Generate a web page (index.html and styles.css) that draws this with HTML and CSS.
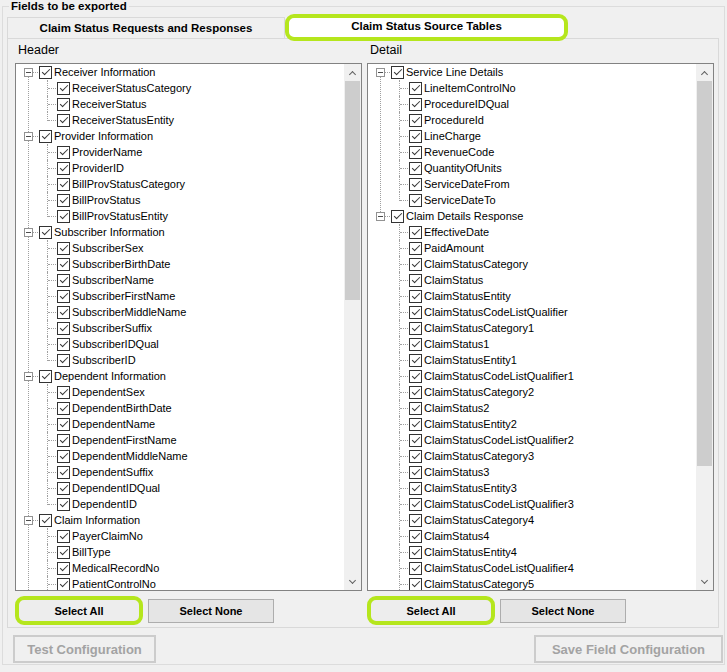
FILE: index.html
```html
<!DOCTYPE html>
<html>
<head>
    <meta charset="utf-8">
    <title>Fields to be exported</title>
    <link rel="stylesheet" href="styles.css">
</head>
<body>
<div class="group">
    <div class="group-title">Fields to be exported</div>
    <div class="tabs">
        <div class="tab">Claim Status Requests and Responses</div>
        <div class="tab active">Claim Status Source Tables</div>
    </div>
    <div class="tab-page">
        <div class="column">
            <div class="caption">Header</div>
            <div class="tree">
                <ul class="tree-body">
                    <li class="node">
                        <div class="row"><span class="exp"></span><span class="cb"></span>Receiver Information</div>
                        <ul class="kids">
                            <li><span class="cb"></span>ReceiverStatusCategory</li>
                            <li><span class="cb"></span>ReceiverStatus</li>
                            <li><span class="cb"></span>ReceiverStatusEntity</li>
                        </ul>
                    </li>
                    <li class="node">
                        <div class="row"><span class="exp"></span><span class="cb"></span>Provider Information</div>
                        <ul class="kids">
                            <li><span class="cb"></span>ProviderName</li>
                            <li><span class="cb"></span>ProviderID</li>
                            <li><span class="cb"></span>BillProvStatusCategory</li>
                            <li><span class="cb"></span>BillProvStatus</li>
                            <li><span class="cb"></span>BillProvStatusEntity</li>
                        </ul>
                    </li>
                    <li class="node">
                        <div class="row"><span class="exp"></span><span class="cb"></span>Subscriber Information</div>
                        <ul class="kids">
                            <li><span class="cb"></span>SubscriberSex</li>
                            <li><span class="cb"></span>SubscriberBirthDate</li>
                            <li><span class="cb"></span>SubscriberName</li>
                            <li><span class="cb"></span>SubscriberFirstName</li>
                            <li><span class="cb"></span>SubscriberMiddleName</li>
                            <li><span class="cb"></span>SubscriberSuffix</li>
                            <li><span class="cb"></span>SubscriberIDQual</li>
                            <li><span class="cb"></span>SubscriberID</li>
                        </ul>
                    </li>
                    <li class="node">
                        <div class="row"><span class="exp"></span><span class="cb"></span>Dependent Information</div>
                        <ul class="kids">
                            <li><span class="cb"></span>DependentSex</li>
                            <li><span class="cb"></span>DependentBirthDate</li>
                            <li><span class="cb"></span>DependentName</li>
                            <li><span class="cb"></span>DependentFirstName</li>
                            <li><span class="cb"></span>DependentMiddleName</li>
                            <li><span class="cb"></span>DependentSuffix</li>
                            <li><span class="cb"></span>DependentIDQual</li>
                            <li><span class="cb"></span>DependentID</li>
                        </ul>
                    </li>
                    <li class="node">
                        <div class="row"><span class="exp"></span><span class="cb"></span>Claim Information</div>
                        <ul class="kids cont">
                            <li><span class="cb"></span>PayerClaimNo</li>
                            <li><span class="cb"></span>BillType</li>
                            <li><span class="cb"></span>MedicalRecordNo</li>
                            <li><span class="cb"></span>PatientControlNo</li>
                        </ul>
                    </li>
                </ul>
                <div class="scrollbar">
                    <span class="sb-btn"><i class="chev up"></i></span>
                    <span class="thumb short"></span>
                    <span class="track"></span>
                    <span class="sb-btn"><i class="chev down"></i></span>
                </div>
            </div>
            <div class="buttons">
                <button class="btn marked">Select All</button>
                <button class="btn">Select None</button>
            </div>
        </div>
        <div class="column">
            <div class="caption">Detail</div>
            <div class="tree">
                <ul class="tree-body">
                    <li class="node">
                        <div class="row"><span class="exp"></span><span class="cb"></span>Service Line Details</div>
                        <ul class="kids">
                            <li><span class="cb"></span>LineItemControlNo</li>
                            <li><span class="cb"></span>ProcedureIDQual</li>
                            <li><span class="cb"></span>ProcedureId</li>
                            <li><span class="cb"></span>LineCharge</li>
                            <li><span class="cb"></span>RevenueCode</li>
                            <li><span class="cb"></span>QuantityOfUnits</li>
                            <li><span class="cb"></span>ServiceDateFrom</li>
                            <li><span class="cb"></span>ServiceDateTo</li>
                        </ul>
                    </li>
                    <li class="node last">
                        <div class="row"><span class="exp"></span><span class="cb"></span>Claim Details Response</div>
                        <ul class="kids cont">
                            <li><span class="cb"></span>EffectiveDate</li>
                            <li><span class="cb"></span>PaidAmount</li>
                            <li><span class="cb"></span>ClaimStatusCategory</li>
                            <li><span class="cb"></span>ClaimStatus</li>
                            <li><span class="cb"></span>ClaimStatusEntity</li>
                            <li><span class="cb"></span>ClaimStatusCodeListQualifier</li>
                            <li><span class="cb"></span>ClaimStatusCategory1</li>
                            <li><span class="cb"></span>ClaimStatus1</li>
                            <li><span class="cb"></span>ClaimStatusEntity1</li>
                            <li><span class="cb"></span>ClaimStatusCodeListQualifier1</li>
                            <li><span class="cb"></span>ClaimStatusCategory2</li>
                            <li><span class="cb"></span>ClaimStatus2</li>
                            <li><span class="cb"></span>ClaimStatusEntity2</li>
                            <li><span class="cb"></span>ClaimStatusCodeListQualifier2</li>
                            <li><span class="cb"></span>ClaimStatusCategory3</li>
                            <li><span class="cb"></span>ClaimStatus3</li>
                            <li><span class="cb"></span>ClaimStatusEntity3</li>
                            <li><span class="cb"></span>ClaimStatusCodeListQualifier3</li>
                            <li><span class="cb"></span>ClaimStatusCategory4</li>
                            <li><span class="cb"></span>ClaimStatus4</li>
                            <li><span class="cb"></span>ClaimStatusEntity4</li>
                            <li><span class="cb"></span>ClaimStatusCodeListQualifier4</li>
                            <li><span class="cb"></span>ClaimStatusCategory5</li>
                        </ul>
                    </li>
                </ul>
                <div class="scrollbar">
                    <span class="sb-btn"><i class="chev up"></i></span>
                    <span class="thumb long"></span>
                    <span class="track"></span>
                    <span class="sb-btn"><i class="chev down"></i></span>
                </div>
            </div>
            <div class="buttons">
                <button class="btn marked">Select All</button>
                <button class="btn">Select None</button>
            </div>
        </div>
    </div>
    <div class="footer">
        <button class="btn-big btn-test" disabled>Test Configuration</button>
        <button class="btn-big btn-save" disabled>Save Field Configuration</button>
    </div>
</div>
</body>
</html>
```

FILE: styles.css
```css
* {
    box-sizing: border-box;
}

html, body {
    margin: 0;
}

body {
    background-color: #f0f0f0;
    font-family: "Liberation Sans", Arial, sans-serif;
    font-size: 11px;
    color: #000;
}

/* outer group box */
.group {
    margin: 6px 2px 0 2px;
    padding: 0 1px 1px 4px;
    border: 1px solid #dcdcdc;
}

.group-title {
    width: max-content;
    margin: -7px 0 0 2px;
    padding: 0 2px;
    background-color: #f0f0f0;
    font-weight: bold;
    font-size: 11.5px;
    line-height: 13px;
}

/* tabs */
.tabs {
    display: flex;
    align-items: flex-end;
    height: 22px;
    margin-top: 3px;
}

.tab {
    display: flex;
    align-items: center;
    justify-content: center;
    width: 278px;
    height: 21px;
    border: 1px solid #d9d9d9;
    border-bottom: none;
    background-color: #f0f0f0;
    font-weight: bold;
    font-size: 11.5px;
}

.tab.active {
    position: relative;
    z-index: 1;
    width: 283px;
    height: 27px;
    margin-bottom: -3px;
    padding-bottom: 3px;
    border: 4px solid #b5e61d;
    border-radius: 9px;
    background-color: #fff;
}

.tab-page {
    display: flex;
    gap: 5px;
    width: 712px;
    height: 590px;
    padding: 3px 4px 0 7px;
    border: 1px solid #d9d9d9;
}

.column {
    width: 347px;
}

.caption {
    height: 16px;
    margin-bottom: 5px;
    padding-left: 3px;
    font-size: 12.5px;
    line-height: 16px;
}

/* tree view */
.tree {
    display: flex;
    height: 528px;
    border: 1px solid #828282;
    background-color: #fff;
}

.tree-body {
    flex: 1;
    overflow: hidden;
    margin: 0;
    padding: 0;
    list-style: none;
}

.tree-body ul {
    margin: 0;
    padding: 0;
    list-style: none;
}

.node {
    position: relative;
}

.node::before {
    content: "";
    position: absolute;
    left: 12px;
    top: 8px;
    bottom: -8px;
    border-left: 1px dotted #a0a0a0;
}

.node.last::before {
    display: none;
}

.row {
    display: flex;
    align-items: center;
    height: 16px;
    padding-left: 8px;
    white-space: nowrap;
}

.exp {
    position: relative;
    flex: none;
    width: 9px;
    height: 9px;
    margin-right: 6px;
    border: 1px solid #929292;
    background-color: #fff;
}

.exp::before {
    content: "";
    position: absolute;
    left: 1px;
    top: 3px;
    width: 5px;
    height: 1px;
    background-color: #4d4d4d;
}

.exp::after {
    content: "";
    position: absolute;
    left: 8px;
    top: 3px;
    width: 5px;
    border-top: 1px dotted #a0a0a0;
}

.cb {
    position: relative;
    flex: none;
    width: 13px;
    height: 13px;
    margin-right: 2px;
    border: 1px solid #333;
    background-color: #fff;
}

.cb::after {
    content: "";
    position: absolute;
    left: 3.5px;
    top: 0.5px;
    width: 3px;
    height: 7px;
    border: solid #333;
    border-width: 0 1.3px 1.3px 0;
    transform: rotate(45deg);
}

.kids li {
    position: relative;
    display: flex;
    align-items: center;
    height: 16px;
    padding-left: 41px;
    white-space: nowrap;
}

.kids li::before {
    content: "";
    position: absolute;
    left: 31px;
    top: 0;
    bottom: 0;
    border-left: 1px dotted #a0a0a0;
}

.kids li:last-child::before {
    bottom: 7px;
}

.kids.cont li:last-child::before {
    bottom: 0;
}

.kids li::after {
    content: "";
    position: absolute;
    left: 32px;
    top: 8px;
    width: 8px;
    border-top: 1px dotted #a0a0a0;
}

/* scrollbar */
.scrollbar {
    display: flex;
    flex-direction: column;
    width: 17px;
    background-color: #f0f0f0;
}

.sb-btn {
    display: flex;
    align-items: center;
    justify-content: center;
    height: 17px;
}

.chev {
    width: 5px;
    height: 5px;
    margin-top: 3px;
    border-left: 1.5px solid #606060;
    border-top: 1.5px solid #606060;
    transform: rotate(45deg);
}

.chev.down {
    margin-top: -3px;
    transform: rotate(225deg);
}

.thumb {
    margin: 0 1px;
    background-color: #cdcdcd;
}

.thumb.short {
    height: 219px;
}

.thumb.long {
    height: 385px;
}

.track {
    flex: 1;
}

/* buttons */
.buttons {
    display: flex;
    align-items: center;
    gap: 5px;
    height: 29px;
    margin-top: 5px;
}

.btn {
    width: 126px;
    height: 24px;
    padding: 0;
    border: 1px solid #adadad;
    background-color: #e5e5e5;
    font: bold 11px "Liberation Sans", Arial, sans-serif;
    color: #000;
}

.btn.marked {
    width: 128px;
    height: 29px;
    border: 4px solid #b5e61d;
    border-radius: 9px;
    background-color: #ededed;
}

.footer {
    display: flex;
    justify-content: space-between;
    margin-top: 7px;
    padding-left: 6px;
}

.btn-big {
    height: 28px;
    padding: 0;
    border: 2px solid #cccccc;
    background-color: #f0f0f0;
    font: bold 13px "Liberation Sans", Arial, sans-serif;
    color: #a3a3a3;
}

.btn-test {
    width: 143px;
}

.btn-save {
    width: 189px;
}
```
